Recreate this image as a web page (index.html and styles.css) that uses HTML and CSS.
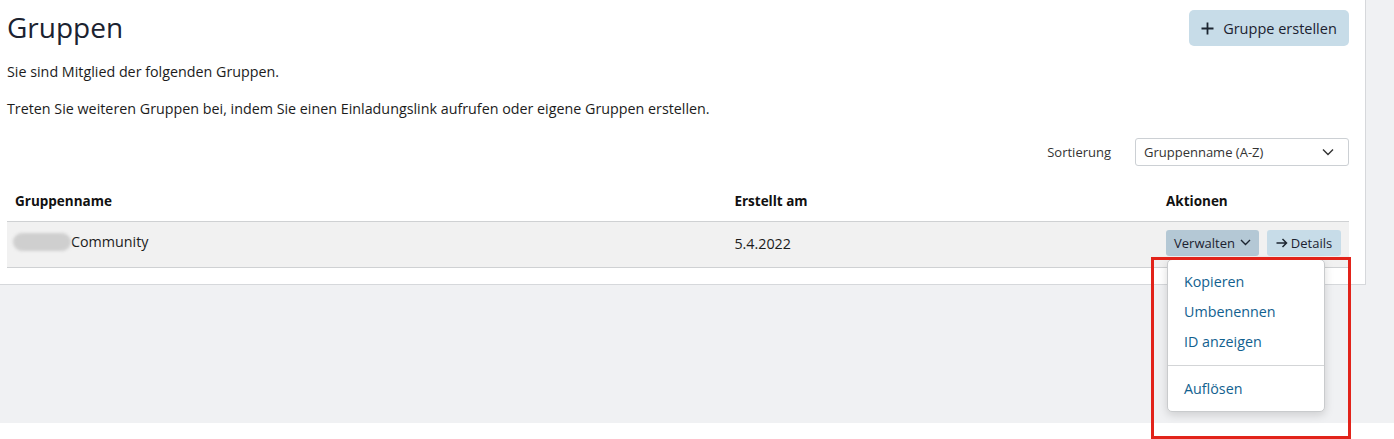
FILE: index.html
```html
<!DOCTYPE html>
<html lang="de">
<head>
<meta charset="utf-8">
<title>Gruppen</title>
<link rel="stylesheet" href="styles.css">
</head>
<body>
<div class="page">
  <div class="main">
    <section class="panel">
      <div class="head">
        <h1 class="title">Gruppen</h1>
        <button class="btn-create"><svg class="plus" width="13" height="13" viewBox="0 0 13 13"><path d="M6.5 0.5v12M0.5 6.5h12" stroke="#1c2530" stroke-width="1.8" fill="none"/></svg><span>Gruppe erstellen</span></button>
      </div>
      <p class="lead">Sie sind Mitglied der folgenden Gruppen.</p>
      <p class="lead second">Treten Sie weiteren Gruppen bei, indem Sie einen Einladungslink aufrufen oder eigene Gruppen erstellen.</p>
      <div class="sortbar">
        <label class="sortlabel">Sortierung</label>
        <div class="select">
          <span>Gruppenname (A-Z)</span>
          <svg width="12" height="8" viewBox="0 0 12 8"><path d="M1 1.5l5 5 5-5" stroke="#333" stroke-width="1.4" fill="none"/></svg>
        </div>
      </div>
      <table class="groups">
        <thead>
          <tr><th class="c1">Gruppenname</th><th class="c2">Erstellt am</th><th class="c3">Aktionen</th></tr>
        </thead>
        <tbody>
          <tr>
            <td class="c1"><span class="name"><span class="blur"></span>Community</span></td>
            <td class="c2">5.4.2022</td>
            <td class="c3">
              <div class="actions">
                <div class="dd">
                  <button class="btn-manage">Verwalten <svg width="11" height="7" viewBox="0 0 11 7"><path d="M1 1l4.5 4.5L10 1" stroke="#1c2530" stroke-width="1.4" fill="none"/></svg></button>
                  <ul class="menu">
                    <li>Kopieren</li>
                    <li>Umbenennen</li>
                    <li>ID anzeigen</li>
                    <li class="sep"></li>
                    <li>Auflösen</li>
                  </ul>
                </div>
                <button class="btn-details"><svg width="12" height="10" viewBox="0 0 12 10"><path d="M0.5 5h10M6.5 1l4 4-4 4" stroke="#1c2530" stroke-width="1.5" fill="none"/></svg><span>Details</span></button>
              </div>
            </td>
          </tr>
        </tbody>
      </table>
    </section>
    <div class="fill"></div>
  </div>
  <div class="side"></div>
</div>
<div class="highlight"></div>
</body>
</html>
```
FILE: styles.css
```css
* { box-sizing: border-box; }
html, body { margin: 0; padding: 0; background: #fff; }
body {
  font-family: "Open Sans", "Noto Sans", sans-serif;
  font-size: 14.3px;
  color: #1c1c1c;
  width: 1394px;
  height: 439px;
  overflow: hidden;
  position: relative;
}
.page { display: flex; height: 423px; background: #f0f1f3; }
.main { width: 1366px; display: flex; flex-direction: column; }
.side { flex: 1; background: #f0f1f3; }
.panel {
  background: #fff;
  border-right: 1px solid #d6d8db;
  border-bottom: 1px solid #d6d8db;
  padding: 0 16px 16px 7px;
  height: 285px;
}
.fill { flex: 1; }
.head { display: flex; justify-content: space-between; align-items: flex-start; padding-top: 10px; }
.title { margin: 0; font-weight: 400; font-size: 28px; line-height: 34px; color: #1b2230; }
.btn-create {
  font: inherit; font-size: 14.5px; color: #1b2230; white-space: nowrap;
  background: #c7dce8; border: none; border-radius: 5px;
  height: 36px; width: 160px; display: flex; align-items: center; justify-content: center; gap: 9px;
  padding: 0;
}
.lead { margin: 0; font-size: 14.3px; line-height: 20px; margin-top: 16px; }
.lead.second { margin-top: 17px; }
.sortbar { display: flex; justify-content: flex-end; align-items: center; margin-top: 19px; gap: 24px; }
.sortlabel { font-size: 13px; color: #333; }
.select {
  width: 214px; height: 28px; border: 1px solid #ccd0d4; border-radius: 3px;
  display: flex; align-items: center; justify-content: space-between;
  padding: 0 14px 0 8px; font-size: 13px; color: #333;
}
.groups { width: 1342px; border-collapse: collapse; margin-top: 20px; }
.groups th { text-align: left; font-weight: 700; font-size: 13.5px; padding: 6px 8px 11px; color: #111; }
.groups td { padding: 0 8px 2px; height: 46px; background: #f1f1f1; border-top: 1px solid #cfd1d3; border-bottom: 1px solid #cfd1d3; font-size: 14.3px; }
.c1 { width: 720px; }
.c2 { width: 432px; }
.name { position: relative; display: inline-flex; align-items: center; }
.blur { display: inline-block; width: 58px; height: 18px; border-radius: 9px; background: #cfcfcf; filter: blur(1.5px); margin-left: -2px; }
.actions { display: flex; gap: 8px; margin-top: -2px; }
.dd { position: relative; }
.btn-manage {
  font: inherit; font-size: 13px; color: #1b2230; white-space: nowrap;
  background: #b4c8d5; border: none; border-radius: 3px; height: 26px; width: 93px;
  display: flex; align-items: center; justify-content: center; gap: 5px; padding: 0;
}
.btn-details {
  font: inherit; font-size: 13px; color: #1b2230; white-space: nowrap;
  background: #c7dce8; border: none; border-radius: 3px; height: 26px; width: 74px; padding: 0;
  display: flex; align-items: center; justify-content: center; gap: 3px;
}
.menu {
  position: absolute; top: 29px; left: 1px; width: 158px; margin: 0; padding: 7px 0 7px;
  list-style: none; background: #fff; border: 1px solid #c9cbcd; border-radius: 5px;
  box-shadow: 0 3px 10px rgba(0,0,0,0.15); z-index: 2;
}
.menu li { font-size: 14.3px; color: #12618f; padding: 0 16px; line-height: 30px; }
.menu li.sep { height: 1px; background: #d3d5d7; margin: 8px 0 8px; padding: 0; line-height: 1px; }
.highlight {
  position: absolute; left: 1151px; top: 257px; width: 200px; height: 182px;
  border: 3px solid #e2231a; pointer-events: none; z-index: 3;
}
```
